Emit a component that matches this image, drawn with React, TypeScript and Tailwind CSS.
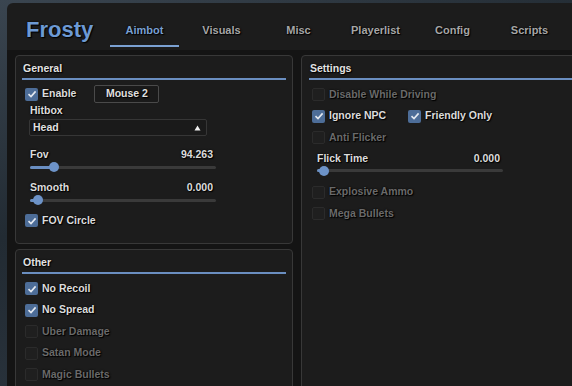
const tabs = ["Aimbot", "Visuals", "Misc", "Playerlist", "Config", "Scripts"];

const shadow = "[text-shadow:0_0_2px_#000,1px_1px_1px_#000]";

const Check = ({ label, on, dim }: { label: string; on?: boolean; dim?: boolean }) => (
  <div className="flex items-center h-[21.5px]">
    <div
      className={`ml-[3px] w-[13px] h-[13px] rounded-[2px] flex items-center justify-center ${
        on ? "bg-[#4d6d98]" : "bg-[#1f1f1f] border border-[#2b2b2b]"
      }`}
    >
      {on && (
        <svg width="10" height="10" viewBox="0 0 10 10">
          <path d="M1.5 5.2 L4 7.6 L8.6 2.4" fill="none" stroke="#e4e9f0" strokeWidth="1.6" />
        </svg>
      )}
    </div>
    <span className={`ml-[4px] ${dim ? "text-[#6a6a6a]" : "text-[#dcdcdc]"} ${shadow}`}>{label}</span>
  </div>
);

const Slider = ({ label, value, pos }: { label: string; value: string; pos: number }) => (
  <>
    <div className={`flex justify-between items-center ml-[8px] w-[183px] h-[16px] text-[#dcdcdc] ${shadow}`}>
      <span>{label}</span>
      <span>{value}</span>
    </div>
    <div className="relative ml-[8px] w-[186px] h-[8px] flex items-center">
      <div className="w-full h-[3px] bg-[#3a3a3a] rounded-full" />
      <div className="absolute left-0 h-[3px] bg-[#6a8fc2] rounded-full" style={{ width: pos }} />
      <div
        className="absolute w-[10px] h-[10px] rounded-full bg-[#6d93c8]"
        style={{ left: pos - 5 }}
      />
    </div>
  </>
);

const Title = ({ text }: { text: string }) => (
  <>
    <div className={`h-[14px] flex items-center pl-[1px] text-[#e2e2e2] ${shadow}`}>{text}</div>
    <div className="mt-[2px] h-[2px] bg-[#6a8ec0]" />
  </>
);

export default function App() {
  return (
    <div
      className="w-[572px] h-[386px] overflow-hidden bg-[linear-gradient(160deg,#3a4550_0%,#222b33_40%,#2f3944_100%)] pt-[3px] pl-[7px]"
      style={{ fontFamily: '"Liberation Sans", Arial, sans-serif' }}
    >
      <div className="w-[620px] h-[400px] bg-[#1c1c1c] rounded-tl-[6px] flex flex-col text-[10.5px] font-bold">
        {/* header */}
        <div className="h-[47px] flex items-center shrink-0">
          <div className={`ml-[19px] pt-[5px] w-[80px] text-[22px] text-[#6d9ad4] ${shadow}`}>Frosty</div>
          {tabs.map((t, i) => (
            <div key={t} className="w-[77px] h-full flex flex-col items-center">
              <div
                className={`flex-1 flex items-center pt-[12px] text-[11px] ${
                  i === 0 ? "text-[#7aa0d2]" : "text-[#a6a6a6]"
                } ${shadow}`}
              >
                {t}
              </div>
              <div className={`w-[69px] h-[2px] mb-[3px] ${i === 0 ? "bg-[#7ba1d2]" : ""}`} />
            </div>
          ))}
        </div>

        {/* content */}
        <div className="flex-1 bg-[#141414] flex gap-[8px] pt-[5px] pl-[8px]">
          <div className="w-[278px] flex flex-col gap-[5px]">
            {/* General */}
            <div className="h-[189px] bg-[#1c1c1c] border border-[#383838] rounded-[4px] px-[6px] pt-[6px] flex flex-col">
              <Title text="General" />
              <div className="mt-[5px] h-[18px] flex items-center">
                <div className="ml-[3px] w-[13px] h-[13px] rounded-[2px] bg-[#4d6d98] flex items-center justify-center">
                  <svg width="10" height="10" viewBox="0 0 10 10">
                    <path d="M1.5 5.2 L4 7.6 L8.6 2.4" fill="none" stroke="#e4e9f0" strokeWidth="1.6" />
                  </svg>
                </div>
                <span className={`ml-[4px] text-[#dcdcdc] ${shadow}`}>Enable</span>
                <div
                  className={`ml-[18px] w-[65px] h-[18px] border border-[#4a4a4a] rounded-[2px] bg-[#1a1a1a] flex items-center justify-center text-[#e0e0e0] ${shadow}`}
                >
                  Mouse 2
                </div>
              </div>
              <div className={`mt-[1px] ml-[8px] h-[14px] flex items-center text-[#dcdcdc] ${shadow}`}>Hitbox</div>
              <div className="mt-[1px] ml-[7px] w-[178px] h-[17px] border border-[#363636] rounded-[2px] bg-[#1a1a1a] flex items-center justify-between px-[3px]">
                <span className={`text-[#e0e0e0] ${shadow}`}>Head</span>
                <svg width="7" height="6" viewBox="0 0 7 6" className="mr-[2px]">
                  <path d="M3.5 0.5 L6.5 5.5 L0.5 5.5 Z" fill="#f0f0f0" />
                </svg>
              </div>
              <div className="mt-[11px]" />
              <Slider label="Fov" value="94.263" pos={24} />
              <div className="mt-[9px]" />
              <Slider label="Smooth" value="0.000" pos={8} />
              <div className="mt-[6px]" />
              <Check label="FOV Circle" on />
            </div>

            {/* Other */}
            <div className="flex-1 bg-[#1c1c1c] border border-[#383838] rounded-[4px] px-[6px] pt-[6px] flex flex-col">
              <Title text="Other" />
              <div className="mt-[4px]" />
              <Check label="No Recoil" on />
              <Check label="No Spread" on />
              <Check label="Uber Damage" dim />
              <Check label="Satan Mode" dim />
              <Check label="Magic Bullets" dim />
            </div>
          </div>

          {/* Settings */}
          <div className="w-[290px] bg-[#1c1c1c] border border-[#383838] rounded-[4px] px-[7px] pt-[6px] flex flex-col">
            <Title text="Settings" />
            <div className="mt-[4px]" />
            <Check label="Disable While Driving" dim />
            <div className="flex">
              <div className="w-[96px]">
                <Check label="Ignore NPC" on />
              </div>
              <Check label="Friendly Only" on />
            </div>
            <Check label="Anti Flicker" dim />
            <div className="mt-[2px]" />
            <Slider label="Flick Time" value="0.000" pos={7} />
            <div className="mt-[7px]" />
            <Check label="Explosive Ammo" dim />
            <Check label="Mega Bullets" dim />
          </div>
        </div>
      </div>
    </div>
  );
}
